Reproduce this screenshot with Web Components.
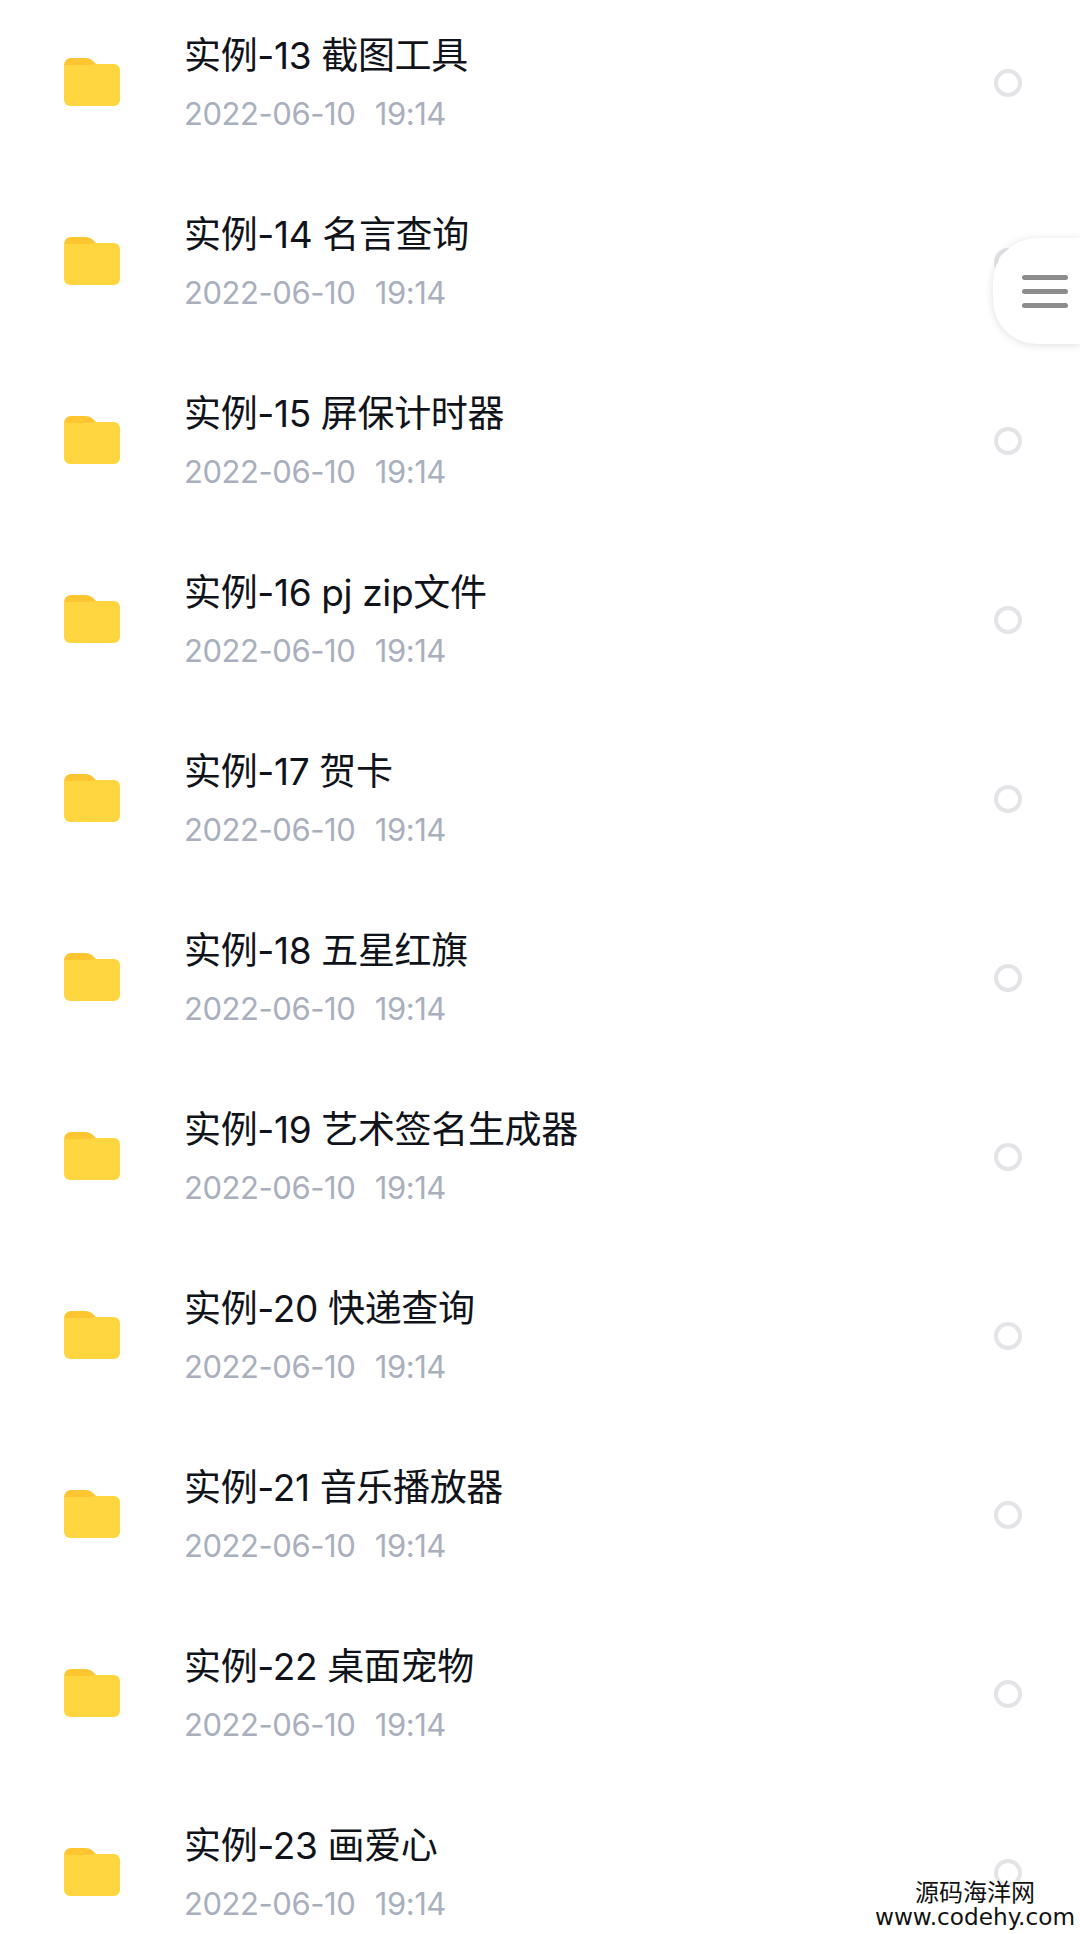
<!DOCTYPE html>
<html lang="zh">
<head>
<meta charset="utf-8">
<title>files</title>
<style>
  html, body { margin: 0; padding: 0; background: #fff; height: 1934px; overflow: hidden; }
  body { font-family: "Inter", "Noto Sans CJK SC", sans-serif; }
</style>
</head>
<body>
<file-page></file-page>

<template id="file-row-tpl">
  <style>
    :host { display: flex; align-items: center; height: 179px; box-sizing: border-box; padding: 0 58px 0 64px; }
    svg { display: block; flex: none; width: 56px; height: 50px; margin-top: -4px; }
    .text { flex: 1; margin-left: 64px; display: flex; flex-direction: column; margin-top: 1px; }
    .name { font-size: 37px; line-height: 50px; letter-spacing: -0.35px; color: #10131a; font-family: "Inter", "Noto Sans CJK SC", sans-serif; white-space: pre; }
    .time { font-size: 31px; line-height: 44px; margin-top: 11px; color: #a9afbd; font-family: "Inter", sans-serif; white-space: pre; letter-spacing: -0.45px; word-spacing: 1.5px; }
    .check { flex: none; width: 28px; height: 28px; box-sizing: border-box; border: 4px solid #e3e4e7; border-radius: 50%; background: #fff; }
  </style>
  <svg viewBox="0 0 56 50">
    <path d="M0 9a7 7 0 0 1 7-7h14c4 0 6 1 9 4l3 3v4H0z" fill="#fdc52f"/>
    <path d="M0 9h24c3 0 5-1 8-1h18a6 6 0 0 1 6 6v30a6 6 0 0 1-6 6H6a6 6 0 0 1-6-6z" fill="#ffd63f"/>
  </svg>
  <div class="text">
    <span class="name"><slot name="name"></slot></span>
    <span class="time"><slot name="time"></slot></span>
  </div>
  <div class="check"></div>
</template>

<template id="float-menu-tpl">
  <style>
    :host { position: absolute; right: 0; top: 238px; width: 87px; height: 106px; box-sizing: border-box; background: #fff;
      border-radius: 44px 0 0 44px; box-shadow: 0 1px 8px rgba(0,0,0,.13); display: flex; flex-direction: column; justify-content: center; gap: 9px; padding-left: 29px; }
    i { display: block; width: 46px; height: 5px; border-radius: 3px; background: #8c8c8c; }
  </style>
  <i></i><i></i><i></i>
</template>

<template id="water-mark-tpl">
  <style>
    :host { position: absolute; right: 5px; bottom: 4px; display: flex; flex-direction: column; align-items: center; color: #111; text-shadow: 0 0 3px #fff, 0 0 3px #fff; }
    .cn { font-family: "Noto Sans CJK SC", sans-serif; font-size: 24px; line-height: 26px; }
    .en { font-family: "DejaVu Sans", sans-serif; font-size: 23.2px; line-height: 26px; }
  </style>
  <span class="cn">源码海洋网</span>
  <span class="en">www.codehy.com</span>
</template>

<script>
  class FileRow extends HTMLElement {
    constructor() {
      super();
      this.shadowDOM = this.attachShadow({ mode: "open" });
      this.shadowDOM.appendChild(document.getElementById("file-row-tpl").content.cloneNode(true));
    }
  }

  class FloatMenu extends HTMLElement {
    constructor() {
      super();
      this.shadowDOM = this.attachShadow({ mode: "open" });
      this.shadowDOM.appendChild(document.getElementById("float-menu-tpl").content.cloneNode(true));
    }
  }

  class WaterMark extends HTMLElement {
    constructor() {
      super();
      this.shadowDOM = this.attachShadow({ mode: "open" });
      this.shadowDOM.appendChild(document.getElementById("water-mark-tpl").content.cloneNode(true));
    }
  }

  class FilePage extends HTMLElement {
    constructor() {
      super();
      this.shadowDOM = this.attachShadow({ mode: "open" });
    }

    connectedCallback() {
      const names = [
        "实例-13 截图工具", "实例-14 名言查询", "实例-15 屏保计时器", "实例-16 pj zip文件",
        "实例-17 贺卡", "实例-18 五星红旗", "实例-19 艺术签名生成器", "实例-20 快递查询",
        "实例-21 音乐播放器", "实例-22 桌面宠物", "实例-23 画爱心"
      ];
      const rows = names.map((name) => `
        <file-row>
          <span slot="name">${name}</span>
          <span slot="time">2022-06-10  19:14</span>
        </file-row>`).join("");
      this.shadowDOM.innerHTML = `
        <style>
          :host { display: block; position: relative; width: 1080px; height: 1934px; overflow: hidden; background: #fff; }
          .list { margin-top: -7px; }
        </style>
        <div class="list">${rows}</div>
        <float-menu></float-menu>
        <water-mark></water-mark>
      `;
    }
  }

  customElements.define("file-row", FileRow);
  customElements.define("float-menu", FloatMenu);
  customElements.define("water-mark", WaterMark);
  customElements.define("file-page", FilePage);
</script>
</body>
</html>
